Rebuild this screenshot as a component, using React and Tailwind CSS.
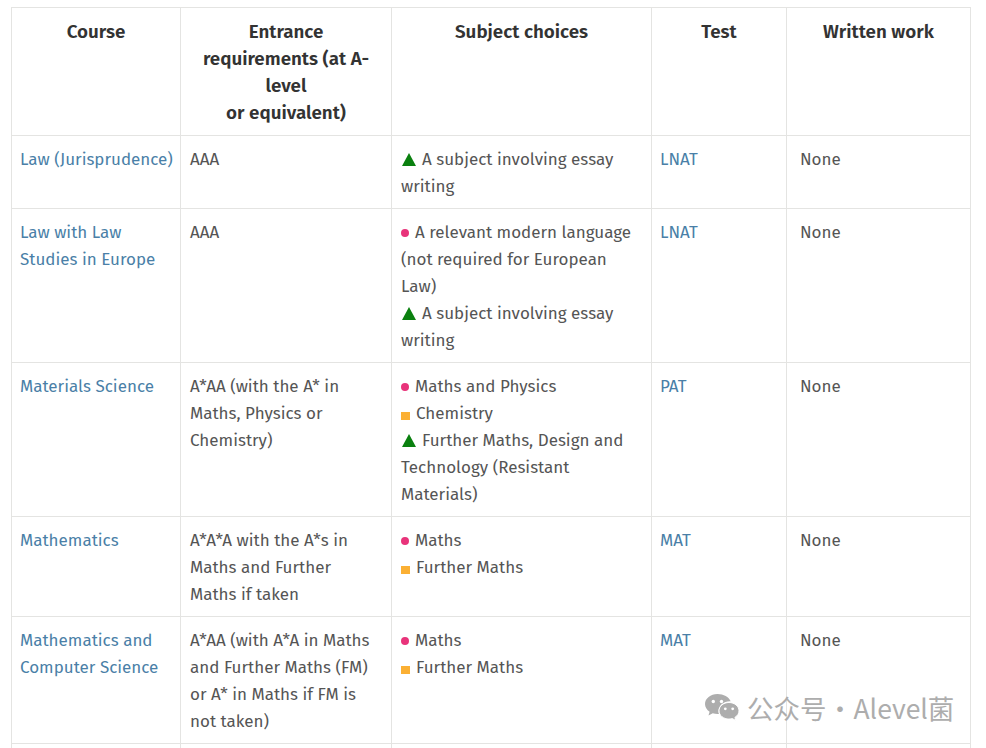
const courses = [
  {
    name: 'Law (Jurisprudence)',
    grades: 'AAA',
    subjects: [['tri', 'A subject involving essay writing']],
    test: 'LNAT',
  },
  {
    name: 'Law with Law Studies in Europe',
    grades: 'AAA',
    subjects: [
      ['dot', 'A relevant modern language (not required for European Law)'],
      ['tri', 'A subject involving essay writing'],
    ],
    test: 'LNAT',
  },
  {
    name: 'Materials Science',
    grades: 'A*AA (with the A* in Maths, Physics or Chemistry)',
    subjects: [
      ['dot', 'Maths and Physics'],
      ['square', 'Chemistry'],
      ['tri', 'Further Maths, Design and Technology (Resistant Materials)'],
    ],
    test: 'PAT',
  },
  {
    name: 'Mathematics',
    grades: 'A*A*A with the A*s in Maths and Further Maths if taken',
    subjects: [
      ['dot', 'Maths'],
      ['square', 'Further Maths'],
    ],
    test: 'MAT',
  },
  {
    name: 'Mathematics and Computer Science',
    grades: 'A*AA (with A*A in Maths and Further Maths (FM) or A* in Maths if FM is not taken)',
    subjects: [
      ['dot', 'Maths'],
      ['square', 'Further Maths'],
    ],
    test: 'MAT',
  },
];

const Marker = ({ type }) => {
  if (type === 'dot') return <span className="inline-block w-[8px] h-[8px] rounded-full bg-[#e8337a] mr-[6px] align-[1px]" />;
  if (type === 'square') return <span className="inline-block w-[9px] h-[8px] bg-[#fbb034] mr-[6px] align-[-1px]" />;
  return (
    <svg className="inline-block mr-[6px] ml-[1px] align-[-1px]" width="14" height="13" viewBox="0 0 14 13">
      <path d="M7 0 L14 13 L0 13 Z" fill="#0a800f" />
    </svg>
  );
};

const WeChat = () => (
  <svg width="36" height="30" viewBox="0 0 36 30" fill="#adadad">
    <path d="M13.5 1C6.6 1 1 5.500 1 11c0 3.100 1.800 5.900 4.600 7.800L4.500 22.500l4.300-2.200c1.500.4 3 .7 4.700.7.500 0 1 0 1.400-.1-.3-1-.4-1.900-.4-2.900 0-5.500 5.100-9.800 11.300-9.800h.9C24.800 3.900 19.600 1 13.500 1z" />
    <path d="M35 17.800c0-4.600-4.500-8.300-10-8.300s-10 3.700-10 8.300 4.500 8.300 10 8.300c1.200 0 2.300-.2 3.400-.5l3.400 1.900-.9-3.100c2.700-1.600 4.100-3.900 4.100-6.600z" stroke="#fff" strokeWidth="1" />
    <circle cx="9.300" cy="8.500" r="1.700" fill="#fff" />
    <circle cx="17.500" cy="8.500" r="1.700" fill="#fff" />
    <circle cx="21.300" cy="15.800" r="1.400" fill="#fff" />
    <circle cx="28.700" cy="15.800" r="1.400" fill="#fff" />
  </svg>
);

const thClass = 'border border-[#e4e4e2] px-[9px] pt-[10px] pb-[9px] align-top text-center text-[18.8px] font-semibold text-[#333333]';
const tdClass = 'border border-[#e4e4e2] px-[9px] pt-[10px] pb-[8px] align-top';

export default function App() {
  return (
    <div className="relative h-[748px] overflow-hidden bg-white font-['Fira_Sans','Noto_Sans',Roboto,sans-serif] text-[17px] leading-[27px] text-[#555555]">
      <div className="pl-[11px] pt-[7px]">
        <table className="w-[959px] table-fixed border-collapse">
          <colgroup>
            <col className="w-[169px]" />
            <col className="w-[211px]" />
            <col className="w-[260px]" />
            <col className="w-[135px]" />
            <col className="w-[184px]" />
          </colgroup>
          <thead>
            <tr>
              <th className={`${thClass} px-[6px]`}>Course</th>
              <th className={`${thClass} px-[6px]`}>
                Entrance requirements (at A-level
                <br />
                or equivalent)
              </th>
              <th className={thClass}>Subject choices</th>
              <th className={thClass}>Test</th>
              <th className={thClass}>Written work</th>
            </tr>
          </thead>
          <tbody>
            {courses.map((course) => (
              <tr key={course.name}>
                <td className={`${tdClass} pl-[8px] pr-[3px]`}>
                  <a className="text-[#4a7fa7]">{course.name}</a>
                </td>
                <td className={`${tdClass} pr-[14px]`}>{course.grades}</td>
                <td className={tdClass}>
                  {course.subjects.map(([type, text]) => (
                    <div key={text}>
                      <Marker type={type} />
                      {text}
                    </div>
                  ))}
                </td>
                <td className={`${tdClass} pl-[8px]`}>
                  <a className="text-[#4a7fa7]">{course.test}</a>
                </td>
                <td className={`${tdClass} pl-[13px]`}>None</td>
              </tr>
            ))}
            <tr>
              <td className={tdClass}>&nbsp;</td>
              <td className={tdClass}>&nbsp;</td>
              <td className={tdClass}>&nbsp;</td>
              <td className={tdClass}>&nbsp;</td>
              <td className={tdClass}>&nbsp;</td>
            </tr>
          </tbody>
        </table>
      </div>

      {/* 公众号水印 */}
      <div className="absolute left-[704px] top-[693px] flex items-center text-[#adadad] text-[26.5px] leading-[30px] font-['Noto_Sans_CJK_SC',sans-serif]">
        <WeChat />
        <span className="ml-[7px] whitespace-nowrap">公众号</span>
        <span className="w-[27px] text-center">·</span>
        <span className="whitespace-nowrap">Alevel菌</span>
      </div>
    </div>
  );
}
